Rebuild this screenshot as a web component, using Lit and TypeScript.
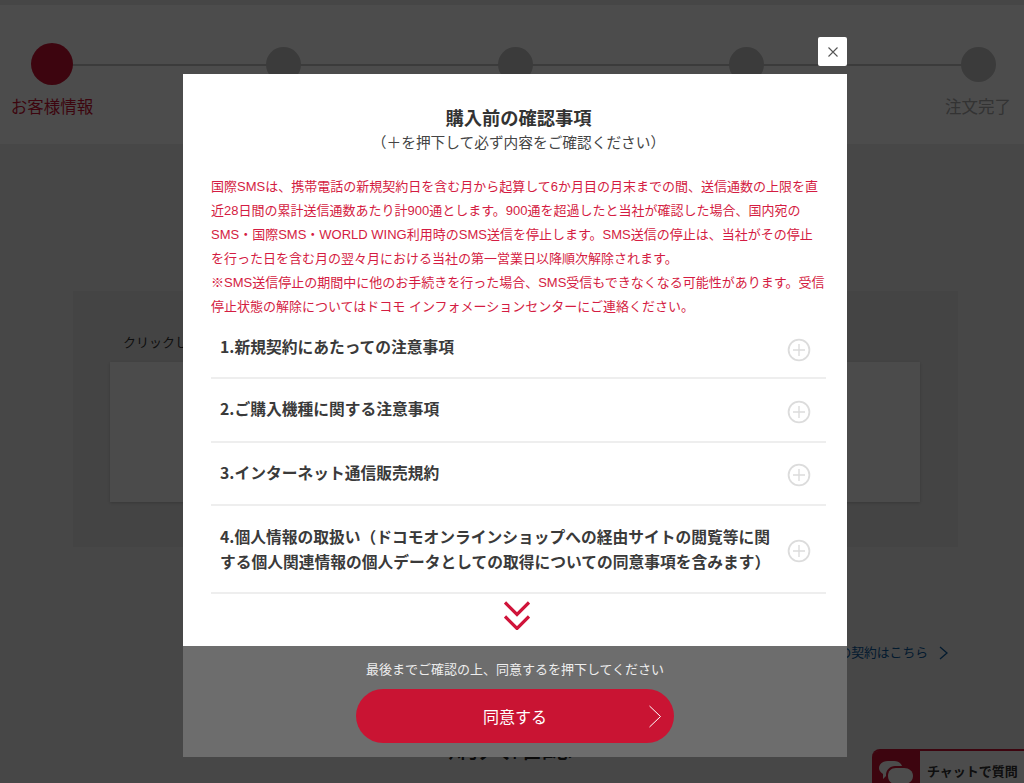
import { LitElement, html, css } from "lit";
import { customElement } from "lit/decorators.js";

const plus = html`<svg class="plus" width="24" height="24" viewBox="0 0 24 24" fill="none" stroke="#dcdcdc"><circle cx="12" cy="12" r="10.4" stroke-width="1.8"/><path d="M12 6v12M6 12h12" stroke-width="1.4"/></svg>`;

@customElement("app-root")
export class AppRoot extends LitElement {
  static styles = css`
    :host { display: block; position: relative; width: 1024px; height: 783px; overflow: hidden; background: #ededed; font-family: "Liberation Sans", "Noto Sans CJK JP", sans-serif; color: #333; }
    .page { display: flex; flex-direction: column; height: 783px; }
    .strip { height: 5px; background: #eaeaea; }
    .header { height: 139px; background: #fff; display: flex; justify-content: space-between; padding: 0 4px 0 10px; position: relative; }
    .header::before { content: ""; position: absolute; left: 52px; right: 46px; top: 59px; height: 2px; background: #c5c5c5; }
    .step { width: 84px; height: 139px; display: flex; flex-direction: column; align-items: center; position: relative; white-space: nowrap; font-size: 16.5px; color: #aaa; }
    .dot { width: 35px; height: 35px; border-radius: 50%; background: #c5c5c5; margin-top: 42px; }
    .step label { margin-top: 12px; line-height: 26px; }
    .step.on { color: #cc1333; }
    .step.on .dot { width: 42px; height: 42px; background: #cc1333; margin-top: 38px; margin-bottom: -3px; }
    .panel { margin: 147px 66px 0 73px; height: 256px; background: #e4e4e4; box-sizing: border-box; padding: 42px 38px 0 37px; display: flex; flex-direction: column; }
    .panel p { margin: 0 0 9px 13px; font-size: 13px; line-height: 20px; color: #333; }
    .box { height: 140px; background: #fbfbfb; box-shadow: 0 1px 3px rgba(0,0,0,.2); }
    .link { margin: 96px 76px 0 0; display: flex; justify-content: flex-end; align-items: center; gap: 11px; font-size: 12.8px; line-height: 20px; color: #0a5a9e; }
    .heading { margin-top: 64px; text-align: center; font-size: 31px; line-height: 40px; padding-right: 4px; color: #222; }
    .chat { position: absolute; left: 872px; top: 749px; width: 152px; height: 40px; border-radius: 8px 0 0 0; background: #fff; border-top: 2px solid #cc1333; box-sizing: border-box; display: flex; }
    .chat .ico { width: 48px; background: #cc1333; border-radius: 6px 0 0 0; display: flex; justify-content: center; padding-top: 10px; box-sizing: border-box; }
    .chat span { font-size: 13px; font-weight: 700; margin: 12px 0 0 7px; white-space: nowrap; line-height: 18px; color: #333; }
    .veil { position: absolute; inset: 0; background: rgba(0,0,0,.7); }
    .close { position: absolute; left: 818px; top: 37px; width: 29px; height: 29px; background: #fff; border-radius: 2px; display: flex; align-items: center; justify-content: center; }
    .modal { position: absolute; left: 183px; top: 74px; width: 664px; height: 683px; background: #fff; display: flex; flex-direction: column; }
    .body { height: 572px; overflow: hidden; box-sizing: border-box; padding: 32px 21px 0 28px; }
    h2 { margin: 0; text-align: center; font-size: 18.3px; line-height: 25px; font-weight: 700; color: #333; }
    .sub { text-align: center; font-size: 14.7px; line-height: 24px; color: #444; }
    .note { margin: 20px 0 0; font-size: 13px; line-height: 24px; color: #d41c42; white-space: nowrap; }
    .row { display: flex; align-items: center; justify-content: space-between; box-sizing: border-box; border-bottom: 2px solid #eee; padding: 0 15px 0 9px; font-family: "Noto Sans CJK JP", sans-serif; font-size: 15.75px; font-weight: 700; line-height: 25px; color: #3a3a3a; }
    .r1 { height: 60px; } .r2 { height: 64px; } .r3 { height: 63px; } .r4 { height: 88px; }
    .row div { white-space: nowrap; padding-bottom: 3px; }
    .row.r4 div { padding-bottom: 1px; }
    .plus { margin-top: 3px; }
    .chev { display: flex; justify-content: center; padding-right: 4px; margin-top: 7px; }
    .foot { height: 111px; background: #6d6d6d; display: flex; flex-direction: column; align-items: center; }
    .foot p { margin: 13px 0 0; font-size: 13px; line-height: 22px; color: #eee; }
    .btn { margin-top: 8px; width: 318px; height: 54px; border-radius: 27px; background: #c91433; color: #fff; font-size: 16px; display: flex; align-items: center; justify-content: center; position: relative; }
    .btn svg { position: absolute; left: 292px; top: 16px; }
  `;

  render() {
    return html`
      <div class="page">
        <div class="strip"></div>
        <div class="header">
          <div class="step on"><div class="dot"></div><label>お客様情報</label></div>
          <div class="step"><div class="dot"></div></div>
          <div class="step"><div class="dot"></div></div>
          <div class="step"><div class="dot"></div></div>
          <div class="step"><div class="dot"></div><label>注文完了</label></div>
        </div>
        <div class="panel">
          <p>クリックして内容をご確認ください</p>
          <div class="box"></div>
        </div>
        <div class="link">お客様の契約はこちら
          <svg width="9" height="14" viewBox="0 0 9 14" fill="none" stroke="#0a5a9e" stroke-width="1.3"><path d="M1 1l7 6-7 6"/></svg>
        </div>
        <div class="heading">購入確認</div>
      </div>
      <div class="chat">
        <div class="ico">
          <svg width="34" height="28" viewBox="0 0 34 28" fill="#fff"><path d="M9 0h6c4 0 7 2 8 5h-7C11 5 7 9 7 14v1l-3 3v-5C1 11 0 9 0 7c0-4 4-7 9-7z"/><path d="M17 7h8c5 0 9 3 9 8s-4 8-9 8h-8c-5 0-8-3-8-8s3-8 8-8z"/></svg>
        </div>
        <span>チャットで質問</span>
      </div>
      <div class="veil"></div>
      <div class="close">
        <svg width="10" height="10" viewBox="0 0 10 10" stroke="#555" stroke-width="1.1"><path d="M.5.5l9 9M9.5.5l-9 9"/></svg>
      </div>
      <div class="modal">
        <div class="body">
          <h2>購入前の確認事項</h2>
          <div class="sub">（＋を押下して必ず内容をご確認ください）</div>
          <p class="note">国際SMSは、携帯電話の新規契約日を含む月から起算して6か月目の月末までの間、送信通数の上限を直<br>近28日間の累計送信通数あたり計900通とします。900通を超過したと当社が確認した場合、国内宛の<br>SMS・国際SMS・WORLD WING利用時のSMS送信を停止します。SMS送信の停止は、当社がその停止<br>を行った日を含む月の翌々月における当社の第一営業日以降順次解除されます。<br>※SMS送信停止の期間中に他のお手続きを行った場合、SMS受信もできなくなる可能性があります。受信<br>停止状態の解除についてはドコモ インフォメーションセンターにご連絡ください。</p>
          <div class="row r1"><div>1.新規契約にあたっての注意事項</div>${plus}</div>
          <div class="row r2"><div>2.ご購入機種に関する注意事項</div>${plus}</div>
          <div class="row r3"><div>3.インターネット通信販売規約</div>${plus}</div>
          <div class="row r4"><div>4.個人情報の取扱い（ドコモオンラインショップへの経由サイトの閲覧等に関<br>する個人関連情報の個人データとしての取得についての同意事項を含みます）</div>${plus}</div>
          <div class="chev">
            <svg width="26" height="29" viewBox="0 0 26 29" fill="none" stroke="#d0143a" stroke-width="3.2"><path d="M1 1.5l12 12 12-12M1 15.5l12 12 12-12"/></svg>
          </div>
        </div>
        <div class="foot">
          <p>最後までご確認の上、同意するを押下してください</p>
          <div class="btn">同意する
            <svg width="14" height="23" viewBox="0 0 14 23" fill="none" stroke="#fff" stroke-width="1"><path d="M1.5 1l11 10.5-11 10.5"/></svg>
          </div>
        </div>
      </div>
    `;
  }
}
